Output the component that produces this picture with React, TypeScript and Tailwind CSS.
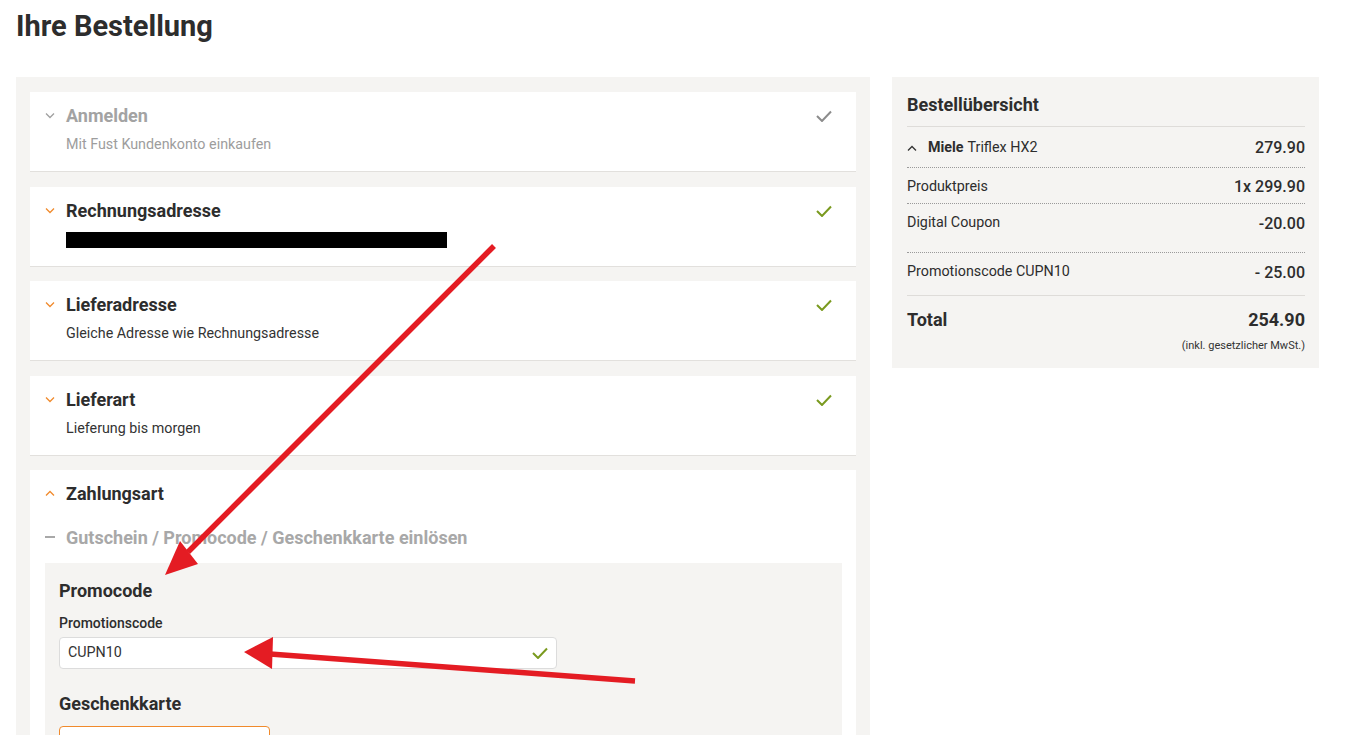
import React from "react";

const Check = ({ color }: { color: string }) => (
  <svg width="16" height="12" viewBox="0 0 16 12" fill="none">
    <polyline points="1,6 6,11 15,1.5" stroke={color} strokeWidth="2" fill="none" />
  </svg>
);

const Chevron = ({ color, up }: { color: string; up?: boolean }) => (
  <svg width="10" height="6" viewBox="0 0 10 6" fill="none">
    <polyline
      points={up ? "1,5.5 5,1.5 9,5.5" : "1,0.5 5,4.5 9,0.5"}
      stroke={color}
      strokeWidth="1.3"
      fill="none"
    />
  </svg>
);

function Card({
  title,
  muted,
  check,
  children,
}: {
  title: string;
  muted?: boolean;
  check: string;
  children: React.ReactNode;
}) {
  return (
    <div className="bg-white border-b border-[#e2e0dd] pl-[15px] pr-[24px] pt-3 pb-4 flex items-start">
      <div className="w-[21px] h-6 flex items-center">
        <Chevron color={muted ? "#a0a0a0" : "#f08a2c"} />
      </div>
      <div className="flex-1">
        <div className={`text-[18px] leading-6 font-bold ${muted ? "text-[#a3a3a3]" : "text-[#2d2d2d]"}`}>{title}</div>
        <div className="mt-[7px] h-5 flex items-center">{children}</div>
      </div>
      <div className="h-6 flex items-center">
        <Check color={check} />
      </div>
    </div>
  );
}

export default function App() {
  return (
    <div
      className="relative w-[1356px] h-[735px] overflow-hidden bg-white text-[#2d2d2d]"
      style={{ fontFamily: "Roboto, 'Liberation Sans', sans-serif" }}
    >
      <h1 className="px-4 pt-[8px] text-[29px] leading-[36px] font-bold text-[#2d2d2d]">Ihre Bestellung</h1>

      <div className="mt-[33px] flex items-start pl-4 gap-[22px]">
        {/* left column */}
        <div className="w-[854px] bg-[#f5f4f2] px-[14px] pt-[15px] flex flex-col gap-[14.5px] h-[700px]">
          <Card title="Anmelden" muted check="#8c8c8c">
            <span className="text-[14.3px] text-[#9d9d9d]">Mit Fust Kundenkonto einkaufen</span>
          </Card>
          <Card title="Rechnungsadresse" check="#7a9a1f">
            <div className="w-[381px] h-4 bg-black" />
          </Card>
          <Card title="Lieferadresse" check="#7a9a1f">
            <span className="text-[14.3px] text-[#333]">Gleiche Adresse wie Rechnungsadresse</span>
          </Card>
          <Card title="Lieferart" check="#7a9a1f">
            <span className="text-[14.3px] text-[#333]">Lieferung bis morgen</span>
          </Card>

          <div className="bg-white pl-[15px] pr-[14px] pt-[11px] flex-1">
            <div className="flex items-center h-6">
              <div className="w-[21px] flex items-center">
                <Chevron color="#f08a2c" up />
              </div>
              <span className="text-[18px] font-bold text-[#2d2d2d]">Zahlungsart</span>
            </div>
            <div className="flex items-center h-6 mt-[20px]">
              <div className="w-[21px] flex items-center">
                <div className="w-[10px] h-[2px] bg-[#a8a8a8]" />
              </div>
              <span className="text-[18px] font-bold text-[#a8a8a8]">Gutschein / Promocode / Geschenkkarte einlösen</span>
            </div>
            <div className="mt-[14px] bg-[#f5f4f2] px-[14px] pt-[16px] h-[200px]">
              <div className="text-[18px] leading-6 font-bold text-[#2d2d2d]">Promocode</div>
              <div className="mt-[10px] text-[14px] leading-5 font-medium text-[#2d2d2d]">Promotionscode</div>
              <div className="mt-[4px] w-[498px] h-[32px] bg-white border border-[#dcdcdc] rounded-[4px] flex items-center justify-between pl-[8px] pr-[8px]">
                <span className="text-[14.3px] text-[#333]">CUPN10</span>
                <Check color="#7a9a1f" />
              </div>
              <div className="mt-[23px] text-[18px] leading-6 font-bold text-[#2d2d2d]">Geschenkkarte</div>
              <div className="mt-[10px] w-[211px] h-[32px] bg-white border border-[#f08a2c] rounded-[4px]" />
            </div>
          </div>
        </div>

        {/* right column */}
        <div className="w-[427px] bg-[#f5f4f2] pl-[15px] pr-[14px] pt-[16px] pb-[14px]">
          <div className="text-[18px] leading-6 font-bold text-[#2d2d2d] pb-[9px] border-b border-[#dedcd9]">Bestellübersicht</div>
          <div className="h-[41px] flex items-center justify-between border-b border-dotted border-[#9a9a9a] pt-[1px]">
            <div className="flex items-center text-[14.3px]">
              <div className="w-[21px] flex items-center">
                <Chevron color="#333" up />
              </div>
              <span className="font-bold">Miele</span>
              <span className="ml-[4px]">Triflex HX2</span>
            </div>
            <span className="text-[16px] font-medium">279.90</span>
          </div>
          <div className="h-[36px] flex items-center justify-between border-b border-dotted border-[#9a9a9a] pt-[3px]">
            <span className="text-[14.3px]">Produktpreis</span>
            <span className="text-[16px] font-medium">1x 299.90</span>
          </div>
          <div className="h-[49px] pt-[8px] flex items-start justify-between border-b border-dotted border-[#9a9a9a]">
            <span className="text-[14.3px]">Digital Coupon</span>
            <span className="text-[16px] font-medium">-20.00</span>
          </div>
          <div className="h-[43px] pt-[8px] flex items-start justify-between border-b border-[#dedcd9]">
            <span className="text-[14.3px]">Promotionscode CUPN10</span>
            <span className="text-[16px] font-medium">- 25.00</span>
          </div>
          <div className="pt-[12px] flex items-center justify-between">
            <span className="text-[18px] leading-6 font-bold">Total</span>
            <span className="text-[18px] leading-6 font-bold">254.90</span>
          </div>
          <div className="text-right text-[11px] leading-4 mt-[6px] text-[#333]">(inkl. gesetzlicher MwSt.)</div>
        </div>
      </div>

      {/* annotation arrows */}
      <svg className="absolute inset-0 pointer-events-none" width="1356" height="735" viewBox="0 0 1356 735">
        <line x1="494" y1="246" x2="188" y2="552" stroke="#e41c23" strokeWidth="5.5" />
        <polygon points="165,575 180,541 198,564" fill="#e41c23" />
        <line x1="635" y1="681" x2="270" y2="654" stroke="#e41c23" strokeWidth="5.5" />
        <polygon points="244,652 273,637 272,669" fill="#e41c23" />
      </svg>
    </div>
  );
}
